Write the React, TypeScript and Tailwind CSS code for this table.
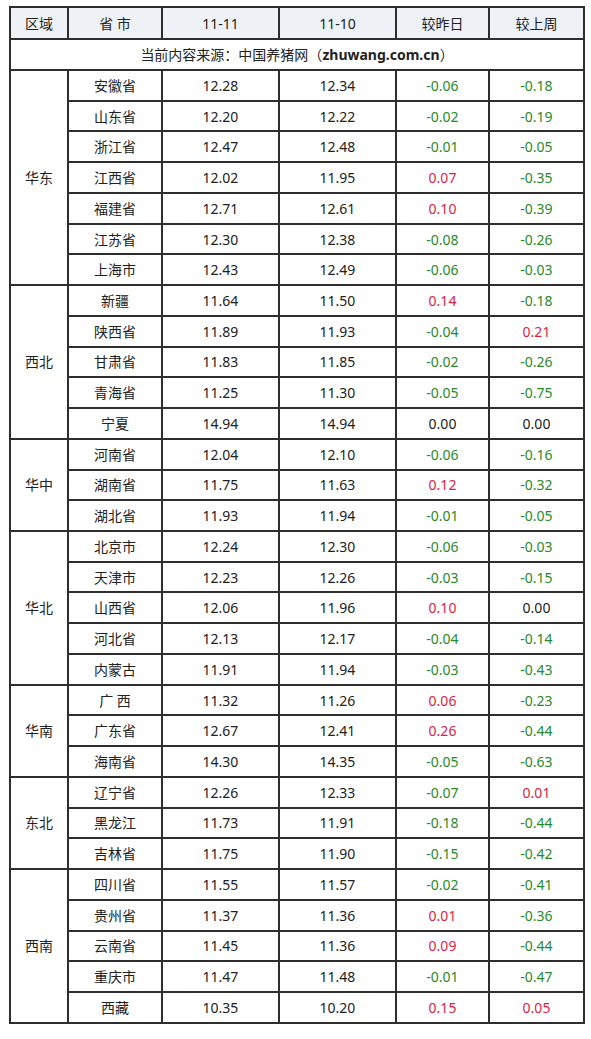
import React from 'react'

type Row = [string, string, string, string, string]

const regions: { name: string; rows: Row[] }[] = [
  {
    name: '华东',
    rows: [
      ['安徽省', '12.28', '12.34', '-0.06', '-0.18'],
      ['山东省', '12.20', '12.22', '-0.02', '-0.19'],
      ['浙江省', '12.47', '12.48', '-0.01', '-0.05'],
      ['江西省', '12.02', '11.95', '0.07', '-0.35'],
      ['福建省', '12.71', '12.61', '0.10', '-0.39'],
      ['江苏省', '12.30', '12.38', '-0.08', '-0.26'],
      ['上海市', '12.43', '12.49', '-0.06', '-0.03'],
    ],
  },
  {
    name: '西北',
    rows: [
      ['新疆', '11.64', '11.50', '0.14', '-0.18'],
      ['陕西省', '11.89', '11.93', '-0.04', '0.21'],
      ['甘肃省', '11.83', '11.85', '-0.02', '-0.26'],
      ['青海省', '11.25', '11.30', '-0.05', '-0.75'],
      ['宁夏', '14.94', '14.94', '0.00', '0.00'],
    ],
  },
  {
    name: '华中',
    rows: [
      ['河南省', '12.04', '12.10', '-0.06', '-0.16'],
      ['湖南省', '11.75', '11.63', '0.12', '-0.32'],
      ['湖北省', '11.93', '11.94', '-0.01', '-0.05'],
    ],
  },
  {
    name: '华北',
    rows: [
      ['北京市', '12.24', '12.30', '-0.06', '-0.03'],
      ['天津市', '12.23', '12.26', '-0.03', '-0.15'],
      ['山西省', '12.06', '11.96', '0.10', '0.00'],
      ['河北省', '12.13', '12.17', '-0.04', '-0.14'],
      ['内蒙古', '11.91', '11.94', '-0.03', '-0.43'],
    ],
  },
  {
    name: '华南',
    rows: [
      ['广 西', '11.32', '11.26', '0.06', '-0.23'],
      ['广东省', '12.67', '12.41', '0.26', '-0.44'],
      ['海南省', '14.30', '14.35', '-0.05', '-0.63'],
    ],
  },
  {
    name: '东北',
    rows: [
      ['辽宁省', '12.26', '12.33', '-0.07', '0.01'],
      ['黑龙江', '11.73', '11.91', '-0.18', '-0.44'],
      ['吉林省', '11.75', '11.90', '-0.15', '-0.42'],
    ],
  },
  {
    name: '西南',
    rows: [
      ['四川省', '11.55', '11.57', '-0.02', '-0.41'],
      ['贵州省', '11.37', '11.36', '0.01', '-0.36'],
      ['云南省', '11.45', '11.36', '0.09', '-0.44'],
      ['重庆市', '11.47', '11.48', '-0.01', '-0.47'],
      ['西藏', '10.35', '10.20', '0.15', '0.05'],
    ],
  },
]

function changeColor(v: string) {
  const n = parseFloat(v)
  if (n > 0) return 'text-[#dc1e44]'
  if (n < 0) return 'text-[#2a8a2a]'
  return 'text-[#222]'
}

const cell = 'border-2 border-[#2e2e2e] text-center align-middle p-0'

export default function App() {
  return (
    <div className="w-[591px] h-[1039px] bg-white pt-[6px] pl-[9px] font-['Noto_Sans','Noto_Sans_CJK_SC',sans-serif] text-[14px] text-[#222]">
      <table className="table-fixed border-collapse w-[576px]">
        <colgroup>
          <col className="w-[58px]" />
          <col className="w-[94px]" />
          <col className="w-[117px]" />
          <col className="w-[117px]" />
          <col className="w-[93px]" />
          <col className="w-[95px]" />
        </colgroup>
        <thead>
          <tr className="h-[32px] bg-[#eef1f5]">
            <th className={`${cell} font-normal`}>区域</th>
            <th className={`${cell} font-normal`}>省 市</th>
            <th className={`${cell} font-normal`}>11-11</th>
            <th className={`${cell} font-normal`}>11-10</th>
            <th className={`${cell} font-normal`}>较昨日</th>
            <th className={`${cell} font-normal`}>较上周</th>
          </tr>
        </thead>
        <tbody>
          <tr className="h-[31px]">
            <td colSpan={6} className={cell}>
              当前内容来源：中国养猪网（<span className="font-bold">zhuwang.com.cn</span>）
            </td>
          </tr>
          {regions.map((region) =>
            region.rows.map((row, i) => (
              <tr key={region.name + row[0]} className="h-[30.74px]">
                {i === 0 && (
                  <td rowSpan={region.rows.length} className={cell}>
                    {region.name}
                  </td>
                )}
                <td className={cell}>{row[0]}</td>
                <td className={cell}>{row[1]}</td>
                <td className={cell}>{row[2]}</td>
                <td className={`${cell} ${changeColor(row[3])}`}>{row[3]}</td>
                <td className={`${cell} ${changeColor(row[4])}`}>{row[4]}</td>
              </tr>
            ))
          )}
        </tbody>
      </table>
    </div>
  )
}
